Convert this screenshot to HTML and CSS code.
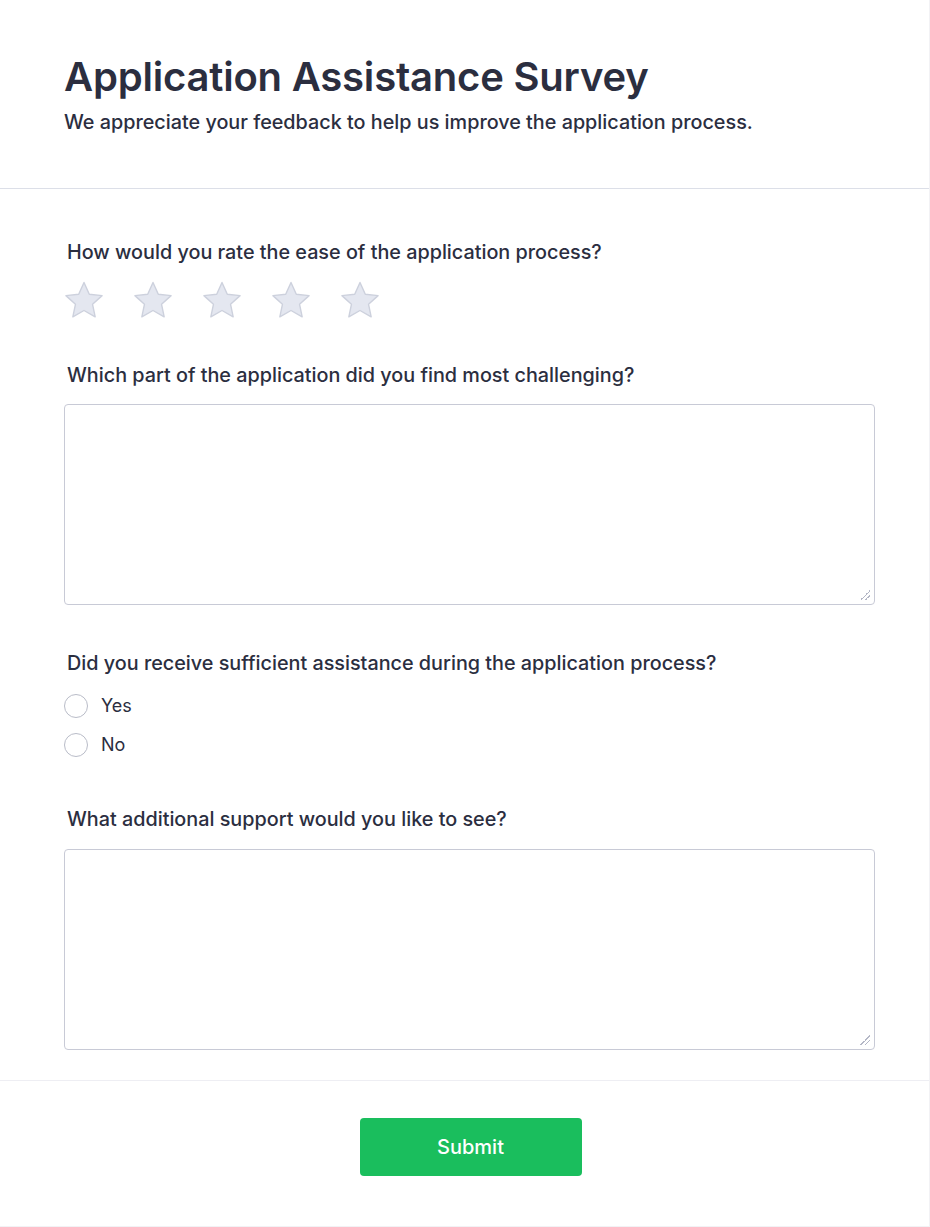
FILE: index.html
```html
<!DOCTYPE html>
<html lang="en">
<head>
<meta charset="utf-8">
<title>Application Assistance Survey</title>
<link rel="stylesheet" href="styles.css">
</head>
<body>
<div class="card">
  <header class="header">
    <h1 class="title">Application Assistance Survey</h1>
    <p class="subtitle">We appreciate your feedback to help us improve the application process.</p>
  </header>
  <main class="body">
    <section class="question">
      <label class="label">How would you rate the ease of the application process?</label>
      <div class="stars">
        <svg class="star" viewBox="0 0 40 40"><path d="M20 1.5L25.29 13.22L38.07 14.63L28.56 23.28L31.17 35.87L20 29.5L8.83 35.87L11.44 23.28L1.93 14.63L14.71 13.22Z"/></svg>
        <svg class="star" viewBox="0 0 40 40"><path d="M20 1.5L25.29 13.22L38.07 14.63L28.56 23.28L31.17 35.87L20 29.5L8.83 35.87L11.44 23.28L1.93 14.63L14.71 13.22Z"/></svg>
        <svg class="star" viewBox="0 0 40 40"><path d="M20 1.5L25.29 13.22L38.07 14.63L28.56 23.28L31.17 35.87L20 29.5L8.83 35.87L11.44 23.28L1.93 14.63L14.71 13.22Z"/></svg>
        <svg class="star" viewBox="0 0 40 40"><path d="M20 1.5L25.29 13.22L38.07 14.63L28.56 23.28L31.17 35.87L20 29.5L8.83 35.87L11.44 23.28L1.93 14.63L14.71 13.22Z"/></svg>
        <svg class="star" viewBox="0 0 40 40"><path d="M20 1.5L25.29 13.22L38.07 14.63L28.56 23.28L31.17 35.87L20 29.5L8.83 35.87L11.44 23.28L1.93 14.63L14.71 13.22Z"/></svg>
      </div>
    </section>
    <section class="question">
      <label class="label">Which part of the application did you find most challenging?</label>
      <textarea class="textarea"></textarea>
    </section>
    <section class="question">
      <label class="label">Did you receive sufficient assistance during the application process?</label>
      <div class="options">
        <label class="option"><span class="radio"></span><span>Yes</span></label>
        <label class="option"><span class="radio"></span><span>No</span></label>
      </div>
    </section>
    <section class="question">
      <label class="label">What additional support would you like to see?</label>
      <textarea class="textarea textarea-last"></textarea>
    </section>
  </main>
  <footer class="footer">
    <button class="submit" type="button">Submit</button>
  </footer>
</div>
</body>
</html>
```

FILE: styles.css
```css
* { box-sizing: border-box; }
html, body { margin: 0; padding: 0; background: #ffffff; }
body {
  font-family: Inter, "Noto Sans", sans-serif;
  color: #2b2e3f;
}
.card {
  width: 930px;
  height: 1227px;
  border-right: 1px solid #f2f2f5;
  border-bottom: 1px solid #f2f2f5;
  display: flex;
  flex-direction: column;
}
.header {
  padding: 54px 64px 0;
  height: 189px;
  border-bottom: 1px solid #dcdfe8;
}
.title {
  margin: 0;
  font-size: 40px;
  line-height: 46px;
  font-weight: 600;
  letter-spacing: -0.2px;
  color: #2b2e3f;
}
.subtitle {
  margin: 10px 0 0;
  font-size: 19.8px;
  line-height: 24px;
  font-weight: 500;
}
.body {
  padding: 51px 55px 0 64px;
  height: 892px;
  border-bottom: 1px solid #eeeef3;
}
.question { display: flex; flex-direction: column; }
.label {
  padding-left: 3px;
  font-size: 19.8px;
  line-height: 24px;
  font-weight: 500;
  color: #2b2e3f;
}
.stars {
  display: flex;
  gap: 29px;
  margin-top: 17px;
  margin-bottom: 42px;
}
.star {
  width: 40px;
  height: 40px;
  fill: #e4e7f0;
  stroke: #cdd1dd;
  stroke-width: 1.4;
  stroke-linejoin: round;
}
.textarea {
  margin-top: 17px;
  width: 811px;
  height: 201px;
  border: 1px solid #c8cad6;
  border-radius: 4px;
  resize: none;
  font: inherit;
  margin-bottom: 46px;
  background-color: #fff;
  background-image: linear-gradient(135deg, transparent 0 50%, #b4b7c6 50% 58%, transparent 58% 72%, #b4b7c6 72% 80%, transparent 80%);
  background-repeat: no-repeat;
  background-size: 10px 10px;
  background-position: right 4px bottom 4px;
}
.textarea-last { margin-top: 18px; }
.options {
  display: flex;
  flex-direction: column;
  gap: 15px;
  margin-top: 19px;
  margin-bottom: 50px;
}
.option {
  display: flex;
  align-items: center;
  gap: 13px;
  font-size: 18px;
  line-height: 24px;
  color: #2b2e3f;
}
.radio {
  width: 24px;
  height: 24px;
  border-radius: 50%;
  border: 1px solid #b9bcc8;
  background: #fff;
}
.footer {
  flex: 1;
  display: flex;
  justify-content: center;
  padding-top: 37px;
  padding-left: 12px;
}
.submit {
  width: 222px;
  height: 58px;
  background: #1abe5d;
  color: #ffffff;
  border: none;
  border-radius: 4px;
  font-family: Inter, "Noto Sans", sans-serif;
  font-size: 20px;
  font-weight: 500;
  cursor: pointer;
}
```
